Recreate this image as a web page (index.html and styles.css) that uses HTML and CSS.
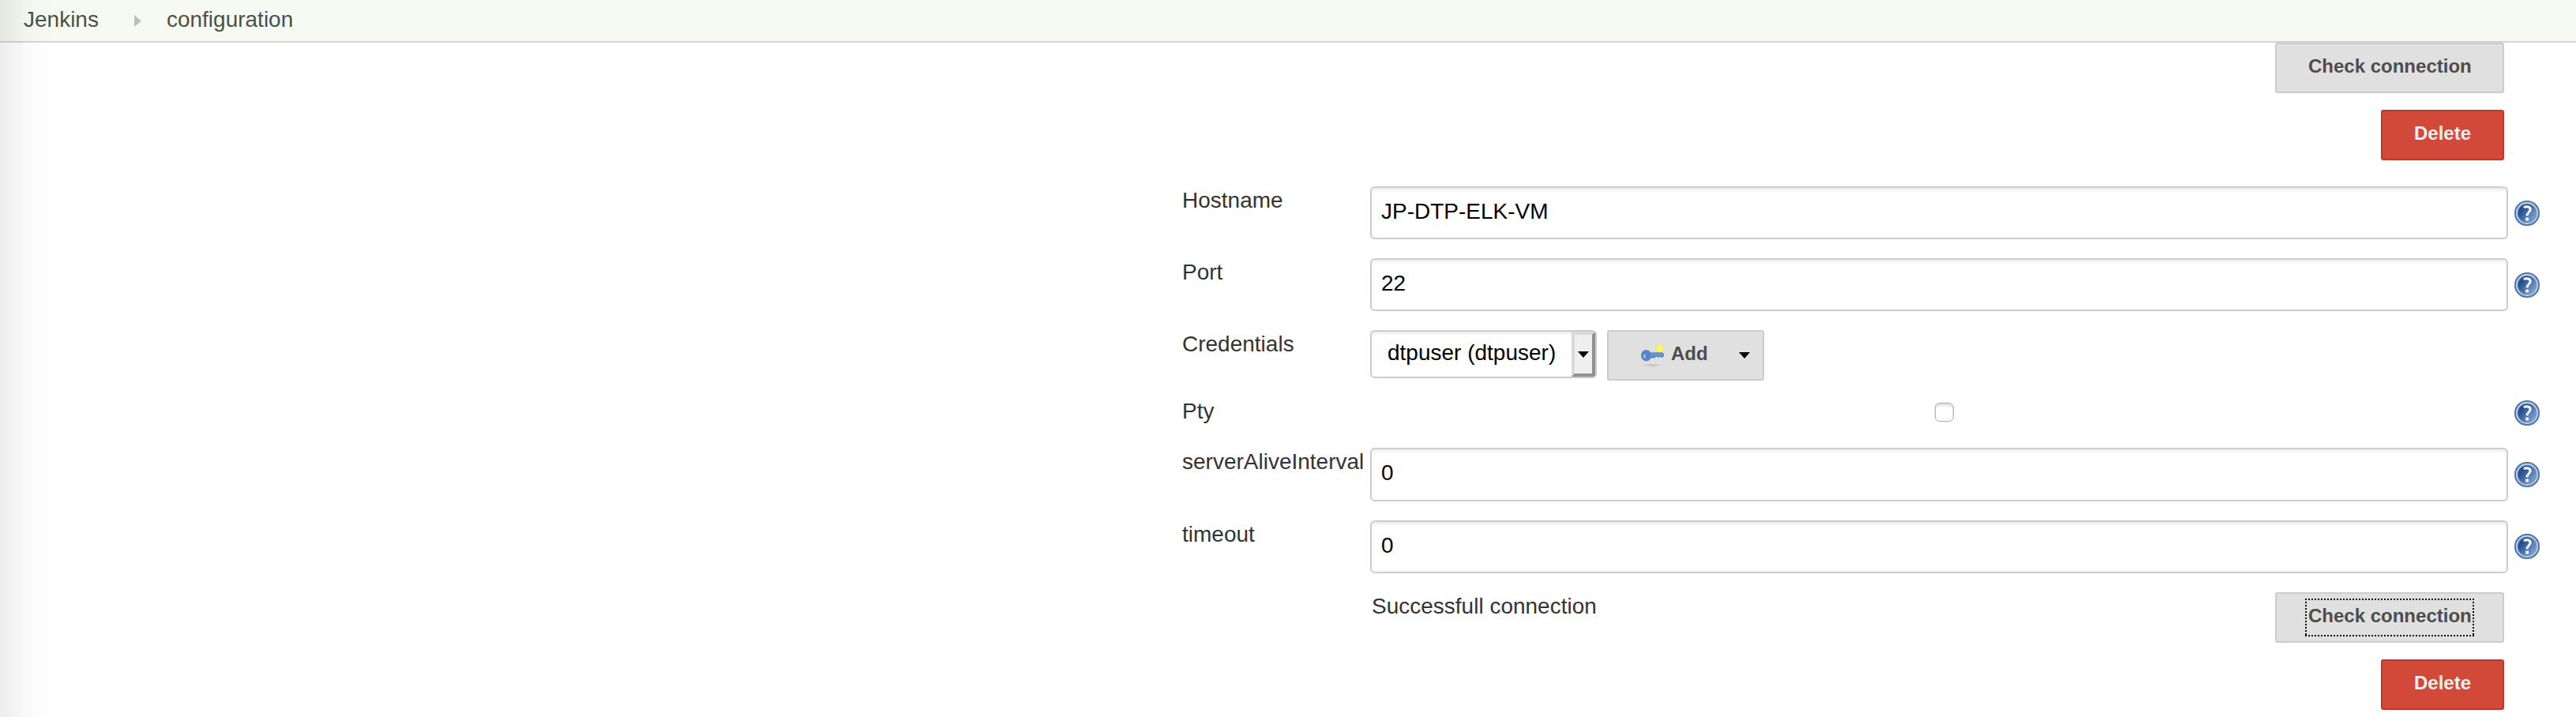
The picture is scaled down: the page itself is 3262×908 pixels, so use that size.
FILE: index.html
```html
<!DOCTYPE html>
<html lang="en">
<head>
<meta charset="utf-8">
<title>configuration [Jenkins]</title>
<link rel="stylesheet" href="styles.css">
</head>
<body>
<svg class="defs" aria-hidden="true">
  <defs>
    <linearGradient id="blue" x1="0" y1="0.1" x2="1" y2="0.9">
      <stop offset="0.25" stop-color="#24508f"/><stop offset="1" stop-color="#8cb0dc"/>
    </linearGradient>
    <radialGradient id="glow"><stop offset="0.25" stop-color="#fffb80"/><stop offset="0.65" stop-color="#fff04a"/><stop offset="1" stop-color="#fff04a" stop-opacity="0"/></radialGradient>
    <radialGradient id="shade"><stop offset="0" stop-color="#bdbdbd"/><stop offset="1" stop-color="#bdbdbd" stop-opacity="0"/></radialGradient>
    <symbol id="help" viewBox="0 0 32 32">
      <circle cx="16" cy="16" r="15" fill="#d6e0ed" stroke="#5278b0" stroke-width="2.200"/>
      <circle cx="16" cy="16" r="12" fill="url(#blue)" stroke="#7595c2" stroke-width="1.200"/>
      <path d="M11.800 8.800c2.600-1.400 8.400-1.800 8.400 2.500 0 3.300-4.200 3.700-4.200 8" fill="none" stroke="#fff" stroke-width="3"/>
      <path d="M14.200 21.600h3.800v3.800h-3.800z" fill="#fff"/>
    </symbol>
  </defs>
</svg>
<header class="breadcrumbs">
  <span>Jenkins</span>
  <svg class="crumb-arrow" viewBox="0 0 9 15"><path d="M0 0L9 7.500L0 15z" fill="#bdbfbb"/></svg>
  <span>configuration</span>
</header>
<main class="config">
  <div class="actions">
    <div class="button connect">Check connection</div>
    <div class="button danger">Delete</div>
  </div>
  <div class="form">
    <div class="row">
      <label>Hostname</label><div class="input">JP-DTP-ELK-VM</div><svg class="help"><use href="#help"/></svg>
    </div>
    <div class="row">
      <label>Port</label><div class="input">22</div><svg class="help"><use href="#help"/></svg>
    </div>
    <div class="row credentials">
      <label>Credentials</label>
      <div class="controls">
        <div class="select"><span>dtpuser (dtpuser)</span><span class="drop"><svg viewBox="0 0 14 8"><path d="M0 0h14L7 8z"/></svg></span></div>
        <div class="button add">
          <svg class="key" viewBox="0 0 32 32">
            <ellipse cx="15" cy="28.500" rx="13" ry="2.200" fill="url(#shade)"/>
            <path d="M12 13L27 12.500q2.500.5 2.500 2.500v2.500l-2.500 1-2-1.500-2 1.500-2.500-1.500-2 2H12z" fill="#5a8cc9" stroke="#4f80bd" stroke-width=".8"/>
            <path d="M7.500 9.500c4 0 6.500 2.800 6.500 6.500s-2.500 7-6.500 7-6-3.200-6-7 2.200-6.500 6-6.500z" fill="#5486c4" stroke="#5d8dc8" stroke-width=".8"/>
            <path d="M13 15h15" stroke="#7ea9dc"/>
            <ellipse cx="5.500" cy="17" rx="1.500" ry="2.500" fill="#a8c2df"/>
            <circle cx="24.700" cy="7.200" r="6" fill="url(#glow)"/>
          </svg>
          <span>Add</span>
          <svg class="caret" viewBox="0 0 14 8"><path d="M0 0h14L7 8z"/></svg>
        </div>
      </div>
    </div>
    <div class="row pty">
      <label>Pty</label><div class="check"><span class="checkbox"></span></div><svg class="help"><use href="#help"/></svg>
    </div>
    <div class="row interval">
      <label>serverAliveInterval</label><div class="input">0</div><svg class="help"><use href="#help"/></svg>
    </div>
    <div class="row timeout">
      <label>timeout</label><div class="input">0</div><svg class="help"><use href="#help"/></svg>
    </div>
  </div>
  <div class="result">
    <div class="message">Successfull connection</div>
    <div class="actions">
      <div class="button connect focused">Check connection</div>
      <div class="button danger">Delete</div>
    </div>
  </div>
</main>
<div class="side-shadow"></div>
</body>
</html>
```
FILE: styles.css
```css
* { box-sizing: border-box; }
body {
  margin: 0;
  height: 908px;
  overflow: hidden;
  background: #fff;
  color: #333;
  font: 28px/32px "Liberation Sans", Arial, sans-serif;
}
.defs { position: absolute; width: 0; height: 0; }
.breadcrumbs {
  display: flex;
  height: 54px;
  padding: 9px 0 0 30px;
  border-bottom: 2px solid #d3d6cf;
  background: #f6faf2;
  color: #4d4f4a;
}
.crumb-arrow { width: 9px; height: 15px; margin: 10px 32px 0 45px; }
.side-shadow {
  position: absolute;
  inset: 0 auto 0 0;
  width: 80px;
  background: linear-gradient(90deg, rgba(0,0,0,.07), rgba(0,0,0,.05) 18%, rgba(0,0,0,.015) 45%, rgba(0,0,0,.004) 75%, transparent);
}
.config { padding-left: 1497px; }
.actions {
  display: flex;
  flex-direction: column;
  align-items: flex-end;
  gap: 21px;
  margin-right: 91px;
}
.button {
  height: 64px;
  padding: 12px 40px 0;
  border: 2px solid #ccc;
  border-radius: 3px;
  background: #e0e0e0;
  color: #4d4d4d;
  font-size: 24px;
  font-weight: bold;
  white-space: nowrap;
}
.connect { width: 290px; }
.danger { border-color: #b93a2b; background: #d24939; color: #eee; }
.form { margin-top: 33px; }
.row {
  display: grid;
  grid-template-columns: 238px 1441px 32px;
  height: 91px;
  align-items: start;
}
.credentials { height: 85px; }
.pty { height: 64px; }
.interval { height: 92px; }
label { padding-top: 2px; white-space: nowrap; }
.input {
  height: 67px;
  padding: 14px 12px 0;
  border: 2px solid #ccc;
  border-radius: 6px;
  background: #fff;
  box-shadow: inset 0 3px 3px rgba(0,0,0,.07);
  color: #000;
}
.interval .input { height: 68px; }
.help { width: 32px; height: 32px; margin: 18px 0 0 8px; }
.pty .help { margin-top: 4px; }
.timeout .help { margin-top: 17px; }
.controls { display: flex; gap: 13px; }
.select {
  display: flex;
  justify-content: space-between;
  width: 287px;
  height: 61px;
  padding-left: 20px;
  border: 2px solid #ccc;
  border-radius: 6px;
  box-shadow: inset 0 3px 3px rgba(0,0,0,.07);
  color: #000;
}
.select > span:first-child { padding-top: 11px; white-space: nowrap; }
.drop {
  width: 30px;
  border: 4px solid;
  border-color: #d9d9d9 #929292 #929292 #d9d9d9;
  border-radius: 0 3px 3px 0;
  background: #efefef;
}
.drop svg { display: block; width: 14px; height: 8px; margin: 21px 0 0 4px; }
.add { display: flex; width: 199px; padding-right: 0; }
.key { flex: none; width: 32px; height: 32px; margin: 2px 7px 0 0; }
.caret { flex: none; width: 14px; height: 8px; margin: 14px 0 0 39px; }
.check { display: flex; justify-content: center; padding: 7px 0 0 13px; }
.checkbox {
  width: 24px;
  height: 24px;
  border: 1.500px solid #aaa;
  border-radius: 6px;
  box-shadow: inset 0 3px 3px rgba(0,0,0,.13);
}
.result { display: flex; justify-content: space-between; }
.message { padding: 2px 0 0 240px; }
.focused { position: relative; }
.focused::after {
  content: "";
  position: absolute;
  inset: 6px 36px;
  background:
    repeating-linear-gradient(90deg, #000 0 2px, transparent 2px 4px) top / 100% 2px no-repeat,
    repeating-linear-gradient(90deg, #000 0 2px, transparent 2px 4px) bottom / 100% 2px no-repeat,
    repeating-linear-gradient(#000 0 2px, transparent 2px 4px) left / 2px 100% no-repeat,
    repeating-linear-gradient(#000 0 2px, transparent 2px 4px) right / 2px 100% no-repeat;
}
```
